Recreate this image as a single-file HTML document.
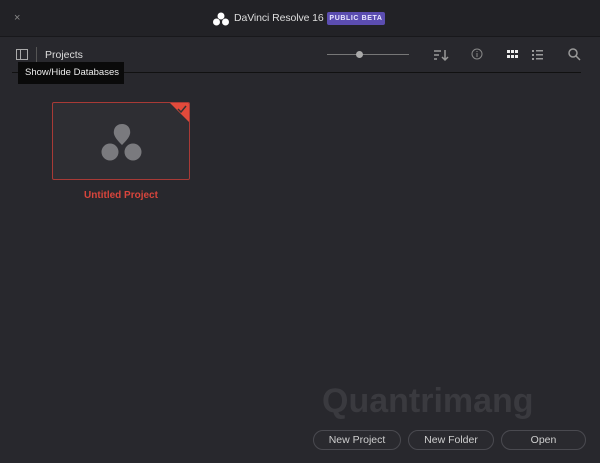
<!DOCTYPE html><html><head><style>
body{margin:0;width:600px;height:463px;background:#28282d;font-family:"Liberation Sans",sans-serif;position:relative;overflow:hidden;color:#ddd}
.a{position:absolute}
.btn{position:absolute;top:430px;height:18px;border:1px solid #4a4a50;border-radius:10px;background:#2a2a2f;color:#cfcfcf;font-size:10.5px;text-align:center;line-height:18px}
</style></head><body>
<div class="a" style="left:0;top:0;width:600px;height:36px;background:#222226;border-bottom:1px solid #18181b"></div>
<div class="a" style="left:14px;top:12px;font-size:11px;color:#888">×</div>
<svg class="a" style="left:213px;top:12px" width="16" height="14"><circle cx="8" cy="4" r="3.5" fill="#fff"/><circle cx="3.5" cy="10" r="3.5" fill="#fff"/><circle cx="12.5" cy="10" r="3.5" fill="#fff"/></svg>
<div class="a" style="left:234px;top:12px;font-size:10.5px;color:#ddd;letter-spacing:-0.1px">DaVinci Resolve 16</div>
<div class="a" style="left:327px;top:12px;width:58px;height:13px;background:#5b4db0;border-radius:2px;color:#e8e6ff;font-size:7px;font-weight:bold;text-align:center;line-height:13px;letter-spacing:.6px">PUBLIC BETA</div>
<div class="a" style="left:16px;top:49px;width:10px;height:9px;border:1px solid #aaa"></div>
<div class="a" style="left:20px;top:50px;width:1px;height:9px;background:#aaa"></div>
<div class="a" style="left:36px;top:47px;width:1px;height:17px;background:#555"></div>
<div class="a" style="left:45px;top:49px;font-size:10.5px;color:#ddd">Projects</div>
<div class="a" style="left:327px;top:54px;width:82px;height:1px;background:#777"></div>
<div class="a" style="left:356px;top:51px;width:7px;height:7px;border-radius:50%;background:#aaa"></div>
<svg class="a" style="left:433px;top:48px" width="16" height="14" stroke="#999" fill="none" stroke-width="1.5"><path d="M1 3h7M1 7h5M1 11h3M12 2v10M9 9l3 3 3-3"/></svg>
<svg class="a" style="left:471px;top:48px" width="12" height="12"><circle cx="6" cy="6" r="5" stroke="#888" fill="none"/><path d="M6 5v4M6 3v1" stroke="#888"/></svg>
<svg class="a" style="left:507px;top:50px" width="12" height="10" fill="#eee"><rect x="0" y="0" width="3" height="3"/><rect x="4" y="0" width="3" height="3"/><rect x="8" y="0" width="3" height="3"/><rect x="0" y="5" width="3" height="3"/><rect x="4" y="5" width="3" height="3"/><rect x="8" y="5" width="3" height="3"/></svg>
<svg class="a" style="left:532px;top:49px" width="12" height="11" fill="#999"><rect x="0" y="1" width="2" height="2"/><rect x="4" y="1" width="7" height="1.5"/><rect x="0" y="5" width="2" height="2"/><rect x="4" y="5" width="7" height="1.5"/><rect x="0" y="9" width="2" height="2"/><rect x="4" y="9" width="7" height="1.5"/></svg>
<svg class="a" style="left:568px;top:48px" width="13" height="13" stroke="#999" fill="none" stroke-width="1.5"><circle cx="5" cy="5" r="4"/><path d="M8 8l4 4"/></svg>
<div class="a" style="left:12px;top:72px;width:569px;height:1px;background:#111"></div>
<div class="a" style="left:18px;top:62px;width:106px;height:22px;background:#0a0a0a;color:#eee;font-size:9.5px;line-height:22px;padding-left:7px;box-sizing:border-box">Show/Hide Databases</div>
<div class="a" style="left:52px;top:102px;width:136px;height:76px;border:1px solid #a83a36;border-radius:2px;background:#2e2e33;overflow:hidden">
<div class="a" style="right:0;top:0;width:0;height:0;border-left:19px solid transparent;border-top:19px solid #e24a3b"></div>
<svg class="a" style="right:2px;top:2px" width="10" height="8"><path d="M1 4l3 3 5-6" stroke="#333" stroke-width="1.5" fill="none"/></svg>
<svg class="a" style="left:48px;top:21px" width="42" height="38" fill="#7a7a7e"><path d="M21 0c-6 0-9 5-8 10 1 4 5 8 8 11 3-3 7-7 8-11 1-5-2-10-8-10z"/><circle cx="9" cy="28" r="8.5"/><circle cx="32" cy="28" r="8.5"/></svg>
</div>
<div class="a" style="left:52px;top:190px;width:138px;text-align:center;font-size:10px;font-weight:bold;color:#d8453c">Untitled Project</div>
<div class="a" style="left:322px;top:382px;font-size:34px;font-weight:bold;color:#3a3a3f">Quantrimang</div>
<div class="btn" style="left:313px;width:86px">New Project</div>
<div class="btn" style="left:408px;width:84px">New Folder</div>
<div class="btn" style="left:501px;width:83px">Open</div>
</body></html>
